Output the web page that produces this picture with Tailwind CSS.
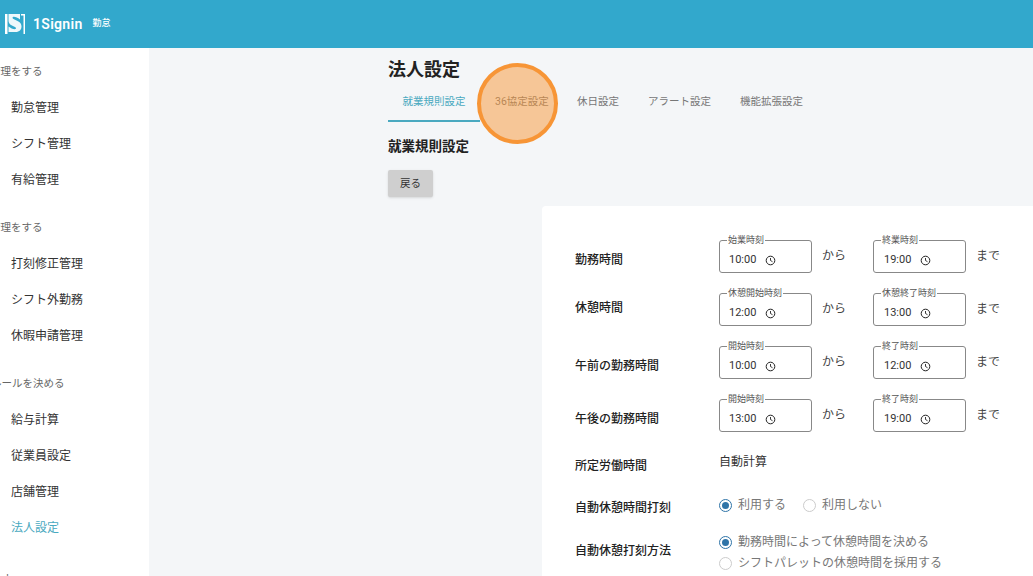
<!DOCTYPE html>
<html lang="ja">
<head>
    <meta charset="UTF-8">
    <title>法人設定</title>
    <script src="https://cdn.jsdelivr.net/npm/@tailwindcss/browser@4"></script>
</head>
<body class="h-[576px] w-[1033px] overflow-hidden bg-[#f4f6f8] font-['Roboto','Noto_Sans_CJK_JP',sans-serif] text-[#222]">
    <!-- header -->
    <header class="flex h-12 items-center bg-[#32a8cc] pl-[5px] text-white">
        <svg width="20" height="20" viewBox="0 0 20 20" class="mr-[8px]">
            <path d="M0 0h2.500v20H0z" fill="#fff"/>
            <path d="M20 0h-4v1.500h2.500V20H20z" fill="#fff"/>
            <path d="M3.500 0H15v5.500C12.500 3.500 9.500 2.500 8 3c-1 .5-.5 1.500 1 2.200l4 2c2.500 1.300 3.500 3 3.500 5.300 0 3-2 5.500-6 5.500H3.500v-5.500c2.500 2 5.500 3 7 2.500 1-.5.5-1.500-1-2.200l-3-1.500C4.500 10.300 3.500 8.500 3.500 6.500z" fill="#eef8fb"/>
        </svg>
        <span class="text-[14px] font-semibold tracking-[0.3px]">1Signin</span>
        <span class="ml-[10px] text-[9px] font-medium">勤怠</span>
    </header>

    <div class="flex h-[528px]">
        <!-- sidebar -->
        <nav class="w-[149px] shrink-0 overflow-hidden bg-white text-[12px] leading-[36px] text-[#333]">
            <p class="ml-[-10px] mt-[15px] text-[10.500px] leading-[18px] text-[#666]">管理をする</p>
            <ul class="mt-[9px] pl-[11px]">
                <li>勤怠管理</li>
                <li>シフト管理</li>
                <li>有給管理</li>
            </ul>
            <p class="ml-[-10px] mt-[21px] text-[10.500px] leading-[18px] text-[#666]">管理をする</p>
            <ul class="mt-[9px] pl-[11px]">
                <li>打刻修正管理</li>
                <li>シフト外勤務</li>
                <li>休暇申請管理</li>
            </ul>
            <p class="ml-[-9px] mt-[21px] text-[10.500px] leading-[18px] text-[#666]">ルールを決める</p>
            <ul class="mt-[9px] pl-[11px]">
                <li>給与計算</li>
                <li>従業員設定</li>
                <li>店舗管理</li>
                <li class="text-[#4aa9c0]">法人設定</li>
            </ul>
            <p class="ml-[-28px] mt-[24px] text-[10.500px] leading-[18px] text-[#666]">レポート</p>
        </nav>

        <!-- main -->
        <main class="relative min-w-0 flex-1 pl-[239px]">
            <h1 class="mt-[9px] text-[18px] font-bold leading-[26px]">法人設定</h1>
            <div class="mt-[5px] flex h-[34px] text-[10.500px] text-[#777]">
                <a class="flex w-[92px] items-center justify-center border-b-2 border-[#4aa9c0] pb-[4px] text-[#4aa9c0]">就業規則設定</a>
                <a class="ml-[15px] flex w-[54px] items-center pb-[6px]">36協定設定</a>
                <a class="ml-[28px] flex w-[42px] items-center pb-[6px]">休日設定</a>
                <a class="ml-[29px] flex w-[63px] items-center pb-[6px]">アラート設定</a>
                <a class="ml-[29px] flex w-[63px] items-center pb-[6px]">機能拡張設定</a>
            </div>
            <h2 class="mt-[14px] text-[13.500px] font-bold leading-[20px]">就業規則設定</h2>
            <button class="mt-[14px] block h-[27px] w-[45px] rounded-[2px] bg-[#cfcfcf] text-[10.500px] text-[#333] shadow-sm">戻る</button>

            <!-- form card -->
            <section class="ml-[154px] mt-[9px] h-[400px] rounded-tl-[4px] bg-white pl-[33px] pt-[34px]">
                <div class="flex h-[53px] items-start">
                    <div class="mt-[11px] w-[144px] text-[12px] font-medium leading-[18px]">勤務時間</div>
                    <div class="relative flex h-[33px] w-[93px] items-center rounded-[3px] border border-[#888] pl-[9px] pt-[8px] text-[11px] text-[#333]">
                        <span class="absolute left-[7px] top-[-7px] bg-white px-px text-[9px] leading-[12px] text-[#555]">始業時刻</span>
                        10:00
                        <svg width="11" height="11" viewBox="0 0 11 11" class="ml-[9px]"><circle cx="5.500" cy="5.500" r="4.300" fill="none" stroke="#222" stroke-width="1"/><path d="M5.500 3v2.500l2 1.200" fill="none" stroke="#222" stroke-width=".9"/></svg>
                    </div>
                    <div class="ml-[10px] mt-[7px] w-[51px] text-[12px] leading-[18px] text-[#444]">から</div>
                    <div class="relative flex h-[33px] w-[93px] items-center rounded-[3px] border border-[#888] pl-[10px] pt-[8px] text-[11px] text-[#333]">
                        <span class="absolute left-[7px] top-[-7px] bg-white px-px text-[9px] leading-[12px] text-[#555]">終業時刻</span>
                        19:00
                        <svg width="11" height="11" viewBox="0 0 11 11" class="ml-[9px]"><circle cx="5.500" cy="5.500" r="4.300" fill="none" stroke="#222" stroke-width="1"/><path d="M5.500 3v2.500l2 1.200" fill="none" stroke="#222" stroke-width=".9"/></svg>
                    </div>
                    <div class="ml-[10px] mt-[7px] text-[12px] leading-[18px] text-[#444]">まで</div>
                </div>

                <div class="flex h-[53px] items-start">
                    <div class="mt-[6px] w-[144px] text-[12px] font-medium leading-[18px]">休憩時間</div>
                    <div class="relative flex h-[33px] w-[93px] items-center rounded-[3px] border border-[#888] pl-[9px] pt-[8px] text-[11px] text-[#333]">
                        <span class="absolute left-[7px] top-[-7px] bg-white px-px text-[9px] leading-[12px] text-[#555]">休憩開始時刻</span>
                        12:00
                        <svg width="11" height="11" viewBox="0 0 11 11" class="ml-[9px]"><circle cx="5.500" cy="5.500" r="4.300" fill="none" stroke="#222" stroke-width="1"/><path d="M5.500 3v2.500l2 1.200" fill="none" stroke="#222" stroke-width=".9"/></svg>
                    </div>
                    <div class="ml-[10px] mt-[7px] w-[51px] text-[12px] leading-[18px] text-[#444]">から</div>
                    <div class="relative flex h-[33px] w-[93px] items-center rounded-[3px] border border-[#888] pl-[10px] pt-[8px] text-[11px] text-[#333]">
                        <span class="absolute left-[7px] top-[-7px] bg-white px-px text-[9px] leading-[12px] text-[#555]">休憩終了時刻</span>
                        13:00
                        <svg width="11" height="11" viewBox="0 0 11 11" class="ml-[9px]"><circle cx="5.500" cy="5.500" r="4.300" fill="none" stroke="#222" stroke-width="1"/><path d="M5.500 3v2.500l2 1.200" fill="none" stroke="#222" stroke-width=".9"/></svg>
                    </div>
                    <div class="ml-[10px] mt-[7px] text-[12px] leading-[18px] text-[#444]">まで</div>
                </div>

                <div class="flex h-[53px] items-start">
                    <div class="mt-[11px] w-[144px] text-[12px] font-medium leading-[18px]">午前の勤務時間</div>
                    <div class="relative flex h-[33px] w-[93px] items-center rounded-[3px] border border-[#888] pl-[9px] pt-[8px] text-[11px] text-[#333]">
                        <span class="absolute left-[7px] top-[-7px] bg-white px-px text-[9px] leading-[12px] text-[#555]">開始時刻</span>
                        10:00
                        <svg width="11" height="11" viewBox="0 0 11 11" class="ml-[9px]"><circle cx="5.500" cy="5.500" r="4.300" fill="none" stroke="#222" stroke-width="1"/><path d="M5.500 3v2.500l2 1.200" fill="none" stroke="#222" stroke-width=".9"/></svg>
                    </div>
                    <div class="ml-[10px] mt-[7px] w-[51px] text-[12px] leading-[18px] text-[#444]">から</div>
                    <div class="relative flex h-[33px] w-[93px] items-center rounded-[3px] border border-[#888] pl-[10px] pt-[8px] text-[11px] text-[#333]">
                        <span class="absolute left-[7px] top-[-7px] bg-white px-px text-[9px] leading-[12px] text-[#555]">終了時刻</span>
                        12:00
                        <svg width="11" height="11" viewBox="0 0 11 11" class="ml-[9px]"><circle cx="5.500" cy="5.500" r="4.300" fill="none" stroke="#222" stroke-width="1"/><path d="M5.500 3v2.500l2 1.200" fill="none" stroke="#222" stroke-width=".9"/></svg>
                    </div>
                    <div class="ml-[10px] mt-[7px] text-[12px] leading-[18px] text-[#444]">まで</div>
                </div>

                <div class="flex h-[53px] items-start">
                    <div class="mt-[11px] w-[144px] text-[12px] font-medium leading-[18px]">午後の勤務時間</div>
                    <div class="relative flex h-[33px] w-[93px] items-center rounded-[3px] border border-[#888] pl-[9px] pt-[8px] text-[11px] text-[#333]">
                        <span class="absolute left-[7px] top-[-7px] bg-white px-px text-[9px] leading-[12px] text-[#555]">開始時刻</span>
                        13:00
                        <svg width="11" height="11" viewBox="0 0 11 11" class="ml-[9px]"><circle cx="5.500" cy="5.500" r="4.300" fill="none" stroke="#222" stroke-width="1"/><path d="M5.500 3v2.500l2 1.200" fill="none" stroke="#222" stroke-width=".9"/></svg>
                    </div>
                    <div class="ml-[10px] mt-[7px] w-[51px] text-[12px] leading-[18px] text-[#444]">から</div>
                    <div class="relative flex h-[33px] w-[93px] items-center rounded-[3px] border border-[#888] pl-[10px] pt-[8px] text-[11px] text-[#333]">
                        <span class="absolute left-[7px] top-[-7px] bg-white px-px text-[9px] leading-[12px] text-[#555]">終了時刻</span>
                        19:00
                        <svg width="11" height="11" viewBox="0 0 11 11" class="ml-[9px]"><circle cx="5.500" cy="5.500" r="4.300" fill="none" stroke="#222" stroke-width="1"/><path d="M5.500 3v2.500l2 1.200" fill="none" stroke="#222" stroke-width=".9"/></svg>
                    </div>
                    <div class="ml-[10px] mt-[7px] text-[12px] leading-[18px] text-[#444]">まで</div>
                </div>

                <div class="mt-[1px] flex h-[42px] items-start">
                    <div class="mt-[4px] w-[144px] text-[12px] font-medium leading-[18px]">所定労働時間</div>
                    <div class="text-[12px] leading-[18px] text-[#333]">自動計算</div>
                </div>
                <div class="flex h-[37px] items-start">
                    <div class="mt-[4px] w-[144px] text-[12px] font-medium leading-[18px]">自動休憩時間打刻</div>
                    <div class="mt-[1px] flex items-center text-[12px] leading-[18px] text-[#777]">
                        <span class="flex size-[13px] items-center justify-center rounded-full border border-[#2f74a8]"><span class="size-[7px] rounded-full bg-[#2f74a8]"></span></span>
                        <span class="ml-[6px]">利用する</span>
                        <span class="ml-[17px] size-[13px] rounded-full border border-[#ccc]"></span>
                        <span class="ml-[6px]">利用しない</span>
                    </div>
                </div>
                <div class="flex items-start">
                    <div class="mt-[10px] w-[144px] text-[12px] font-medium leading-[18px]">自動休憩打刻方法</div>
                    <div class="text-[12px] leading-[21px] text-[#777]">
                        <div class="flex items-center">
                            <span class="flex size-[13px] items-center justify-center rounded-full border border-[#2f74a8]"><span class="size-[7px] rounded-full bg-[#2f74a8]"></span></span>
                            <span class="ml-[6px]">勤務時間によって休憩時間を決める</span>
                        </div>
                        <div class="flex items-center">
                            <span class="size-[13px] rounded-full border border-[#ccc]"></span>
                            <span class="ml-[6px]">シフトパレットの休憩時間を採用する</span>
                        </div>
                    </div>
                </div>
            </section>

            <!-- click marker -->
            <div class="absolute left-[328px] top-[15px] size-[81px] rounded-full border-4 border-[#f79536] bg-[#f79536]/50"></div>
        </main>
    </div>
</body>
</html>
